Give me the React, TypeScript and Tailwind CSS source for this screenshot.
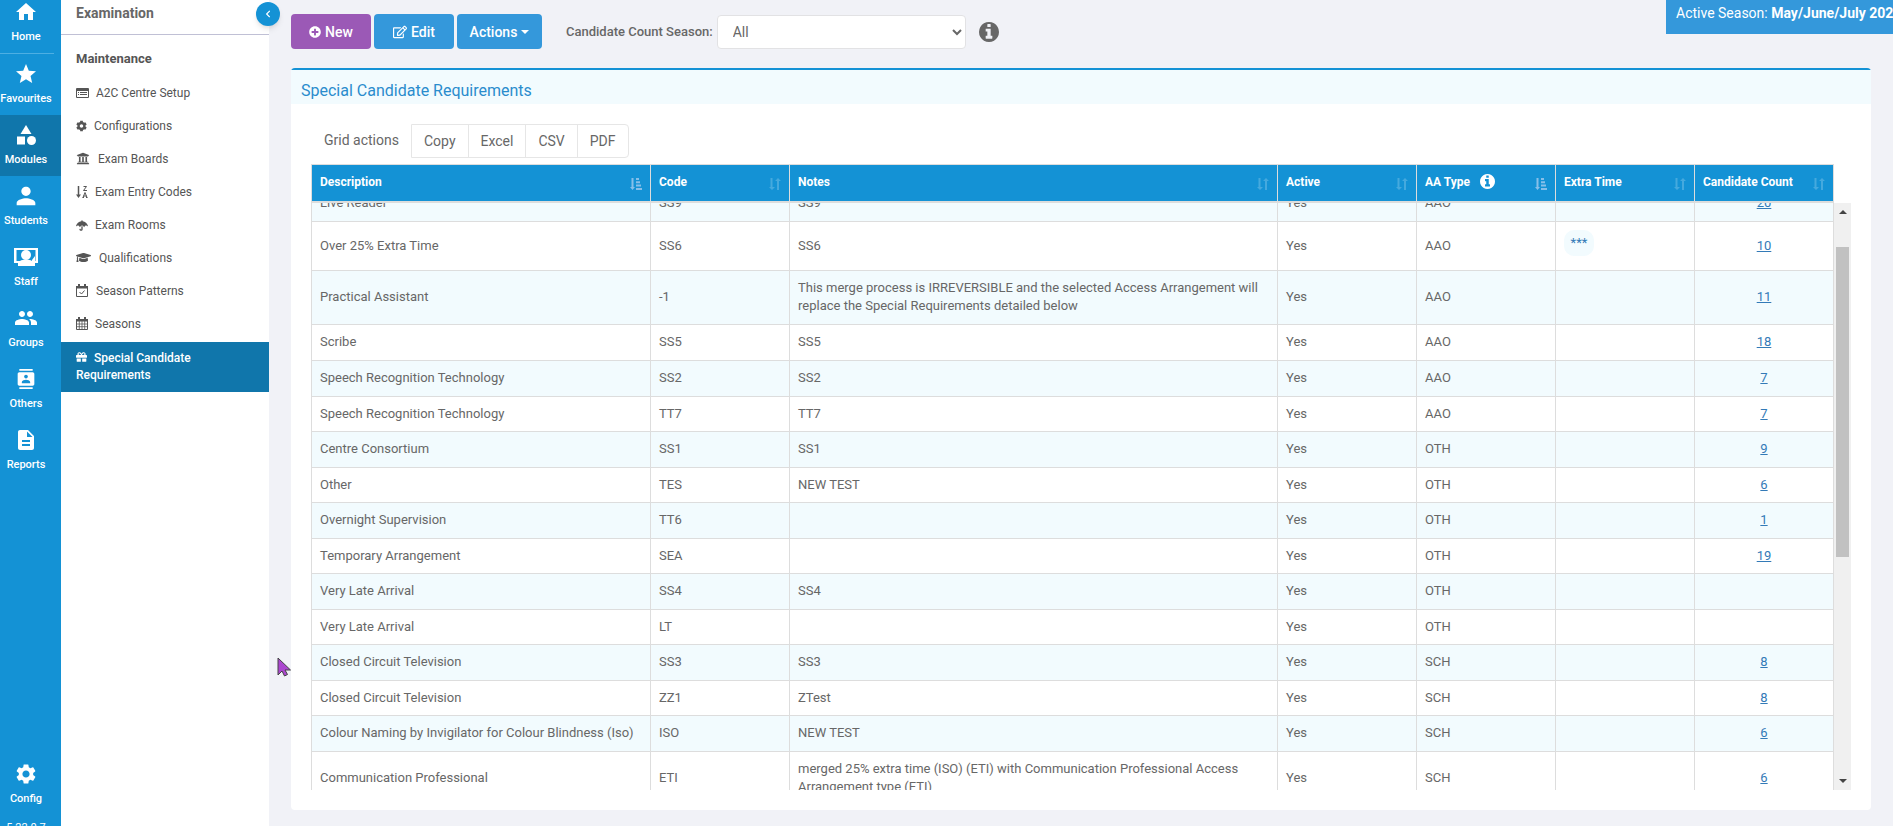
import { FaChevronLeft, FaCog, FaGift, FaGraduationCap, FaPlusCircle, FaRegEdit, FaUmbrella, FaUniversity } from 'react-icons/fa';
import { MdCategory, MdContacts, MdDescription, MdHome, MdPeople, MdPerson, MdSettings, MdStar } from 'react-icons/md';

type IconProps = { className?: string };

function StaffIcon({ className }: IconProps) {
  return (
    <svg viewBox="0 0 24 24" className={className} fill="currentColor">
      <path fillRule="evenodd" d="M0 3h24v15h-3v3H4v-3H0V3Zm2.500 2v11H6c1.500-1 3.500-1.500 6-1.500s4.500.5 6 1.500h3.500V5h-19Z" />
      <circle cx="12" cy="10" r="5" />
      <path d="m18 15 3-4v5h-3z" />
    </svg>
  );
}

function InfoIcon({ className }: IconProps) {
  return (
    <svg viewBox="128 128 1536 1536" className={className} fill="currentColor">
      <path d="M1152 1376v-160q0-14-9-23t-23-9h-96v-512q0-14-9-23t-23-9h-320q-14 0-23 9t-9 23v160q0 14 9 23t23 9h96v320h-96q-14 0-23 9t-9 23v160q0 14 9 23t23 9h448q14 0 23-9t9-23zM1024 480v-160q0-14-9-23t-23-9h-192q-14 0-23 9t-9 23v160q0 14 9 23t23 9h192q14 0 23-9t9-23zM1664 896q0 209-103 385.500t-279.500 279.500-385.500 103-385.500-103-279.500-279.500-103-385.500 103-385.500 279.500-279.500 385.500-103 385.500 103 279.500 279.500 103 385.500z" />
    </svg>
  );
}

function ListIcon({ className }: IconProps) {
  return (
    <svg viewBox="0 0 13 12" className={className} fill="currentColor">
      <path fillRule="evenodd" d="M1 1h11a1 1 0 0 1 1 1v8a1 1 0 0 1-1 1H1a1 1 0 0 1-1-1V2a1 1 0 0 1 1-1Zm0 3v6h11V4H1Z" />
      <path d="M2 5h1v1H2zM4 5h7v1H4zM2 7h1v1H2zM4 7h7v1H4z" />
    </svg>
  );
}

function SortAlphaIcon({ className }: IconProps) {
  return (
    <svg viewBox="0 0 12 12" className={className} fill="none" stroke="currentColor">
      <path strokeWidth="1.500" d="M2.500 0v10" />
      <path fill="currentColor" stroke="none" d="M0 8.500h5L2.500 12z" />
      <path d="M7.500.5h3l-3 4h3.500M7 11.500l2-5 2 5M7.500 10h3M6.500 11.500H8M10 11.500h1.500" />
    </svg>
  );
}

function CalendarCheckIcon({ className }: IconProps) {
  return (
    <svg viewBox="0 0 12 13" className={className} fill="none" stroke="currentColor">
      <path d="M.5 2.500h11v10H.5z" />
      <path fill="currentColor" stroke="none" d="M0 2h12v2.500H0zM2 0h2v3H2zM8 0h2v3H8z" />
      <path d="m3.500 8 2 2 3-3.500" />
    </svg>
  );
}

function CalendarIcon({ className }: IconProps) {
  return (
    <svg viewBox="0 0 12 13" className={className} fill="none" stroke="currentColor">
      <path d="M.5 2.500h11v10H.5z" />
      <path fill="currentColor" stroke="none" d="M0 2h12v2.500H0zM2 0h2v3H2zM8 0h2v3H8z" />
      <path strokeWidth=".8" d="M3.300 4v8M6 4v8M8.700 4v8M1 7h10M1 9.700h10" />
    </svg>
  );
}

function SortIcon({ sorted }: { sorted?: boolean }) {
  if (sorted) {
    return (
      <svg viewBox="0 0 12 12" className="mt-1 size-3 text-[#86bfe9]" fill="currentColor">
        <path d="M1.500 0h2v9H5l-2.500 3L0 9h1.500zM6 0h3v2H6zM6 3.300h4v2H6zM6 6.600h5v2H6zM6 10h6v2H6z" />
      </svg>
    );
  }
  return (
    <svg viewBox="0 0 12 12" className="mt-1 size-3 text-[#45a9de]" fill="currentColor">
      <path d="M1.500 0h2v9H6l-3 3-3-3h1.500zM8 12h2V3h2L9 0 6 3h2z" />
    </svg>
  );
}

const railItems = [
  { label: 'Favourites', icon: <MdStar className="size-6" /> },
  { label: 'Modules', icon: <MdCategory className="size-6" />, active: true },
  { label: 'Students', icon: <MdPerson className="size-7" /> },
  { label: 'Staff', icon: <StaffIcon className="size-6" /> },
  { label: 'Groups', icon: <MdPeople className="size-6" /> },
  { label: 'Others', icon: <MdContacts className="size-5" /> },
  { label: 'Reports', icon: <MdDescription className="size-6" /> },
];

const menuItems = [
  { label: 'A2C Centre Setup', icon: <ListIcon className="mr-[7px] inline h-3 w-[13px] align-[-2px]" /> },
  { label: 'Configurations', icon: <FaCog className="mr-[7px] inline h-3 w-[11px] align-[-2px]" /> },
  { label: 'Exam Boards', icon: <FaUniversity className="mr-2 inline h-[13px] w-[14px] align-[-2px]" /> },
  { label: 'Exam Entry Codes', icon: <SortAlphaIcon className="mr-[7px] inline size-3 align-[-2px]" /> },
  { label: 'Exam Rooms', icon: <FaUmbrella className="mr-[7px] inline h-[11px] w-3 align-[-2px]" /> },
  { label: 'Qualifications', icon: <FaGraduationCap className="mr-2 inline h-[15px] w-[15px] align-[-3px]" /> },
  { label: 'Season Patterns', icon: <CalendarCheckIcon className="mr-2 inline h-[13px] w-3 align-[-2px]" /> },
  { label: 'Seasons', icon: <CalendarIcon className="mr-[7px] inline h-[13px] w-3 align-[-2px]" /> },
];

const columns = [
  { label: 'Description', sorted: true },
  { label: 'Code' },
  { label: 'Notes' },
  { label: 'Active' },
  { label: 'AA Type', sorted: true, info: true },
  { label: 'Extra Time' },
  { label: 'Candidate Count' },
];

type Row = {
  description: string;
  code: string;
  notes?: string;
  type: string;
  extraTime?: string;
  count?: number;
  height?: string;
};

const rows: Row[] = [
  { description: 'Live Reader', code: 'SS9', notes: 'SS9', type: 'AAO', count: 20 },
  { description: 'Over 25% Extra Time', code: 'SS6', notes: 'SS6', type: 'AAO', extraTime: '***', count: 10, height: 'h-[49px]' },
  {
    description: 'Practical Assistant',
    code: '-1',
    notes: 'This merge process is IRREVERSIBLE and the selected Access Arrangement will replace the Special Requirements detailed below',
    type: 'AAO',
    count: 11,
    height: 'h-[54px]',
  },
  { description: 'Scribe', code: 'SS5', notes: 'SS5', type: 'AAO', count: 18, height: 'h-9' },
  { description: 'Speech Recognition Technology', code: 'SS2', notes: 'SS2', type: 'AAO', count: 7 },
  { description: 'Speech Recognition Technology', code: 'TT7', notes: 'TT7', type: 'AAO', count: 7 },
  { description: 'Centre Consortium', code: 'SS1', notes: 'SS1', type: 'OTH', count: 9 },
  { description: 'Other', code: 'TES', notes: 'NEW TEST', type: 'OTH', count: 6 },
  { description: 'Overnight Supervision', code: 'TT6', type: 'OTH', count: 1 },
  { description: 'Temporary Arrangement', code: 'SEA', type: 'OTH', count: 19 },
  { description: 'Very Late Arrival', code: 'SS4', notes: 'SS4', type: 'OTH' },
  { description: 'Very Late Arrival', code: 'LT', type: 'OTH' },
  { description: 'Closed Circuit Television', code: 'SS3', notes: 'SS3', type: 'SCH', count: 8 },
  { description: 'Closed Circuit Television', code: 'ZZ1', notes: 'ZTest', type: 'SCH', count: 8 },
  { description: 'Colour Naming by Invigilator for Colour Blindness (Iso)', code: 'ISO', notes: 'NEW TEST', type: 'SCH', count: 6 },
  {
    description: 'Communication Professional',
    code: 'ETI',
    notes: 'merged 25% extra time (ISO) (ETI) with Communication Professional Access Arrangement type (ETI)',
    type: 'SCH',
    count: 6,
    height: 'h-[54px]',
  },
];

function RailItem({ label, icon, active }: { label: string; icon: React.ReactNode; active?: boolean }) {
  return (
    <a href="#" className={`flex h-[61px] shrink-0 flex-col items-center pt-2 pr-[9px] text-white ${active ? 'bg-[#1076ab]' : ''}`}>
      <span className="flex h-6 items-center">{icon}</span>
      <span className="mt-[5px] text-[11px] leading-4 font-medium">{label}</span>
    </a>
  );
}

function Columns() {
  return (
    <colgroup>
      <col className="w-[339px]" />
      <col className="w-[139px]" />
      <col />
      <col className="w-[139px]" />
      <col className="w-[139px]" />
      <col className="w-[139px]" />
      <col className="w-[139px]" />
    </colgroup>
  );
}

export default function App() {
  return (
    <div className="flex h-screen overflow-hidden bg-[#f1f2f7] font-[Roboto,sans-serif] text-[13px] text-[#676767]">
      <nav className="flex w-[61px] shrink-0 flex-col bg-[#1492d5]">
        <div className="-mt-2 flex flex-col">
          <RailItem label="Home" icon={<MdHome className="size-6" />} />
          <hr className="mr-[7px] border-[#4dafe3]" />
          {railItems.map((item) => (
            <RailItem key={item.label} {...item} />
          ))}
        </div>
        <div className="mt-auto -mb-3">
          <RailItem label="Config" icon={<MdSettings className="size-6" />} />
          <p className="pt-[3px] pr-[9px] text-center text-[11px] leading-5 text-white">5.22.0.7</p>
        </div>
      </nav>

      <aside className="relative w-[208px] shrink-0 bg-white text-[#555]">
        <h2 className="h-[35px] border-b border-[#c0c0d5] px-[15px] pt-1 text-sm leading-[18px] font-bold text-[#676767]">Examination</h2>
        <button aria-label="Collapse menu" className="absolute top-[2px] -right-[11px] flex size-6 items-center justify-center rounded-full bg-[#1492d5] text-white shadow-md">
          <FaChevronLeft className="size-2" />
        </button>
        <h3 className="px-[15px] pt-[15px] pb-[10px] text-[13px] leading-[17px] font-bold">Maintenance</h3>
        <ul>
          {menuItems.map(({ label, icon }) => (
            <li key={label}>
              <a href="#" className="block h-[33px] px-[15px] py-2 text-xs leading-[17px]">
                {icon}
                {label}
              </a>
            </li>
          ))}
          <li className="pt-px">
            <a href="#" className="block bg-[#1076ab] py-2 pr-10 pl-[15px] text-xs leading-[17px] font-medium text-white">
              <FaGift className="mr-[7px] inline h-3 w-[11px] align-[-1px]" />
              Special Candidate Requirements
            </a>
          </li>
        </ul>
      </aside>

      <main className="flex min-w-0 flex-1 flex-col pb-4 pl-[22px]">
        <div className="flex h-[68px] shrink-0 items-start justify-between">
          <div className="flex items-center pt-[14px]">
            <button className="flex h-[35px] w-20 items-center justify-center gap-1 rounded bg-[#9b59b6] text-sm font-medium text-white">
              <FaPlusCircle className="size-3" />
              New
            </button>
            <button className="ml-[3px] flex h-[35px] w-20 items-center justify-center gap-1 rounded bg-[#3498db] text-sm font-medium text-white">
              <FaRegEdit className="size-[14px]" />
              Edit
            </button>
            <button className="ml-[3px] flex h-[35px] w-[85px] items-center justify-center gap-1 rounded bg-[#3498db] text-sm font-medium text-white">
              Actions
              <svg viewBox="0 0 8 4" className="h-1 w-2" fill="currentColor"><path d="M0 0h8L4 4z" /></svg>
            </button>
            <label htmlFor="season" className="ml-6 font-medium">Candidate Count Season:</label>
            <select id="season" className="ml-1 h-[34px] w-[249px] rounded border border-[#e2e2e4] bg-white px-[11px] text-sm">
              <option>All</option>
            </select>
            <InfoIcon className="ml-[13px] size-5" />
          </div>
          <div className="h-[34px] w-[227px] overflow-hidden bg-[#3498db] pt-1 pl-[10px] text-sm leading-[18px] whitespace-nowrap text-white">
            Active Season: <b className="font-bold">May/June/July 202</b>
          </div>
        </div>

        <section className="mr-[22px] flex min-h-0 flex-1 flex-col rounded-sm border-t-2 border-[#1492d5] bg-white">
          <h1 className="h-[34px] shrink-0 bg-[#f2fbfe] px-[10px] pt-[11px] text-base leading-5 text-[#2a8ccd]">Special Candidate Requirements</h1>
          <div className="flex min-h-0 flex-1 flex-col px-5 pt-5 pb-5">
            <div className="flex h-10 shrink-0 items-start pl-[13px] text-sm">
              <span className="w-[87px] leading-8">Grid actions</span>
              <div className="flex h-[34px] divide-x divide-[#e6e6e6] rounded-r-sm border border-[#e6e6e6]">
                <button className="px-3">Copy</button>
                <button className="px-3">Excel</button>
                <button className="px-3">CSV</button>
                <button className="px-3">PDF</button>
              </div>
            </div>

            <div className="shrink-0 pr-[17px]">
              <table className="w-full table-fixed border-collapse border border-[#ddd] bg-[#1492d5] text-xs text-white">
                <Columns />
                <thead>
                  <tr className="h-[37px]">
                    {columns.map((col) => (
                      <th key={col.label} scope="col" className="border border-b-2 border-[#ddd] px-2 pb-[2px] text-left font-bold">
                        <span className="flex items-center justify-between">
                          <span className="flex items-center gap-[10px]">
                            {col.label}
                            {col.info && <InfoIcon className="size-[15px]" />}
                          </span>
                          <SortIcon sorted={col.sorted} />
                        </span>
                      </th>
                    ))}
                  </tr>
                </thead>
              </table>
            </div>

            <div className="flex min-h-0 flex-1">
              <div className="min-w-0 flex-1 overflow-hidden">
                <table className="-mt-[18px] w-full table-fixed border-collapse border border-[#ddd]">
                  <Columns />
                  <tbody>
                    {rows.map((row) => (
                      <tr key={row.code} className={`odd:bg-[#f2fbfe] ${row.height ?? 'h-[35px] odd:h-9'}`}>
                        <td className="border border-[#ddd] px-2 leading-[18px]">{row.description}</td>
                        <td className="border border-[#ddd] px-2 leading-[18px]">{row.code}</td>
                        <td className="border border-[#ddd] px-2 leading-[18px]">{row.notes}</td>
                        <td className="border border-[#ddd] px-2 leading-[18px]">Yes</td>
                        <td className="border border-[#ddd] px-2 leading-[18px]">{row.type}</td>
                        <td className="border border-[#ddd] px-2 leading-[18px]">
                          {row.extraTime && (
                            <span className="mb-[6px] block w-[30px] rounded-[10px] bg-[#f2fbfe] py-1 text-center text-[#337ab7]">{row.extraTime}</span>
                          )}
                        </td>
                        <td className="border border-[#ddd] px-2 text-center leading-[18px]">
                          {row.count && <a href="#" className="text-[#337ab7] underline">{row.count}</a>}
                        </td>
                      </tr>
                    ))}
                  </tbody>
                </table>
              </div>
              <div className="flex w-[17px] shrink-0 flex-col items-center bg-[#f0f0f0] py-[7px] text-[#444]">
                <svg viewBox="0 0 8 4" className="h-1 w-2" fill="currentColor"><path d="M4 0l4 4H0z" /></svg>
                <div className="mt-[33px] h-[310px] w-[13px] bg-[#c1c1c1]" />
                <svg viewBox="0 0 8 4" className="mt-auto h-1 w-2" fill="currentColor"><path d="M0 0h8L4 4z" /></svg>
              </div>
            </div>
          </div>
        </section>
      </main>

      <svg viewBox="0 0 14 20" className="absolute top-[657px] left-[277px] h-5 w-[14px]" fill="#ab47cf" stroke="#444" strokeWidth="1">
        <path d="M1 1v17l4-4 2.500 5 3-1.500L8 13h5.500z" />
      </svg>
    </div>
  );
}
